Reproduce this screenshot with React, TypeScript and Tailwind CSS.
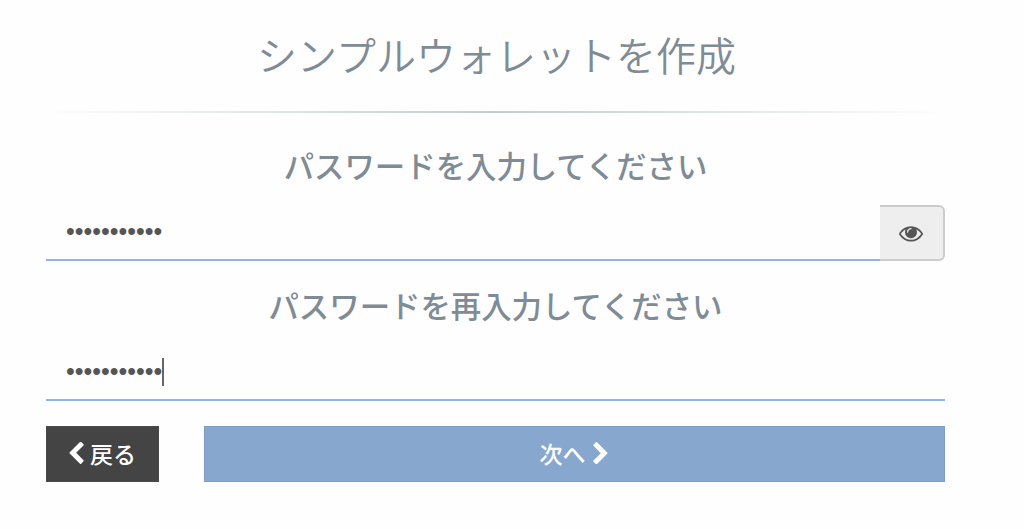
import { useState } from "react";

const DOTS = "•••••••••••";

function EyeIcon() {
  return (
    <svg viewBox="0 0 1792 1792" className="mr-px mb-px h-6 w-6 fill-[#555555]">
      <path d="M1664 960q-152-236-381-353 61 104 61 225 0 185-131.5 316.5t-316.5 131.5-316.5-131.5-131.5-316.5q0-121 61-225-229 117-381 353 133 205 333.5 326.5t434.5 121.5 434.5-121.5 333.5-326.5zm-720-384q0-20-14-34t-34-14q-125 0-214.5 89.5t-89.5 214.5q0 20 14 34t34 14 34-14 14-34q0-86 61-147t147-61q20 0 34-14t14-34zm848 384q0 34-20 69-140 230-376.5 368.5t-499.5 138.5-499.5-139-376.5-368q-20-35-20-69t20-69q140-229 376.5-368t499.5-139 499.5 139 376.5 368q20 35 20 69z" />
    </svg>
  );
}

function Chevron({ className }: { className?: string }) {
  return (
    <svg viewBox="390 46 1056 1598" className={`h-[22px] w-[15px] fill-white ${className ?? ""}`}>
      <path d="M1427 301l-531 531 531 531q19 19 19 45t-19 45l-166 166q-19 19-45 19t-45-19l-742-742q-19-19-19-45t19-45l742-742q19-19 45-19t45 19l166 166q19 19 19 45t-19 45z" />
    </svg>
  );
}

function Label({ children }: { children: string }) {
  return <label className="block h-[38px] text-center text-[30.4px] leading-[38px] font-medium text-[#7f8b95]">{children}</label>;
}

function Field({ caret }: { caret?: boolean }) {
  return (
    <div className="flex h-14 flex-1 items-center border-b-2 border-[#93b4eb] pl-5 text-[#555555]">
      <span className="pb-0.5 font-['Liberation_Sans',sans-serif] text-[25px] leading-none">{DOTS}</span>
      {caret && <span className="h-7 w-0.5 bg-[#666666]"></span>}
    </div>
  );
}

function App() {
  const [active] = useState(true);

  return (
    <div className="h-[529px] bg-[#fefefe] pl-[46px] font-['Noto_Sans_CJK_JP',sans-serif]">
      <div className="flex w-[899px] flex-col pt-[26px]">
        <h1 className="h-14 pl-0.5 text-center text-[40px] leading-[56px] font-[350] text-[#7f8b95]">シンプルウォレットを作成</h1>
        <div className="mt-[29px] h-0.5 bg-linear-to-r from-transparent via-[#c3cccd] to-transparent"></div>

        <div className="mt-[33px]">
          <Label>パスワードを入力してください</Label>
        </div>
        <div className="mt-[21px] flex">
          <Field />
          <button className="flex h-14 w-[65px] items-center justify-center rounded-r-md border-2 border-l-0 border-[#cccccc] bg-[#eeeeee]">
            <EyeIcon />
          </button>
        </div>

        <div className="mt-[25px]">
          <Label>パスワードを再入力してください</Label>
        </div>
        <div className="mt-[21px] flex">
          <Field caret={active} />
        </div>

        <div className="mt-[25px] flex gap-[45px]">
          <button className="flex h-14 w-[113px] items-center justify-center gap-1.5 border border-[#4a4a4a] bg-[#444444] pb-0.5 text-[23px] font-medium text-white">
            <Chevron />
            戻る
          </button>
          <button className="flex h-14 flex-1 items-center justify-center gap-[7px] border border-[#7d9dc4] bg-[#88a7cf] pr-0.5 pb-0.5 text-[23px] font-medium text-white">
            次へ
            <Chevron className="rotate-180" />
          </button>
        </div>
      </div>
    </div>
  );
}

export default App;
